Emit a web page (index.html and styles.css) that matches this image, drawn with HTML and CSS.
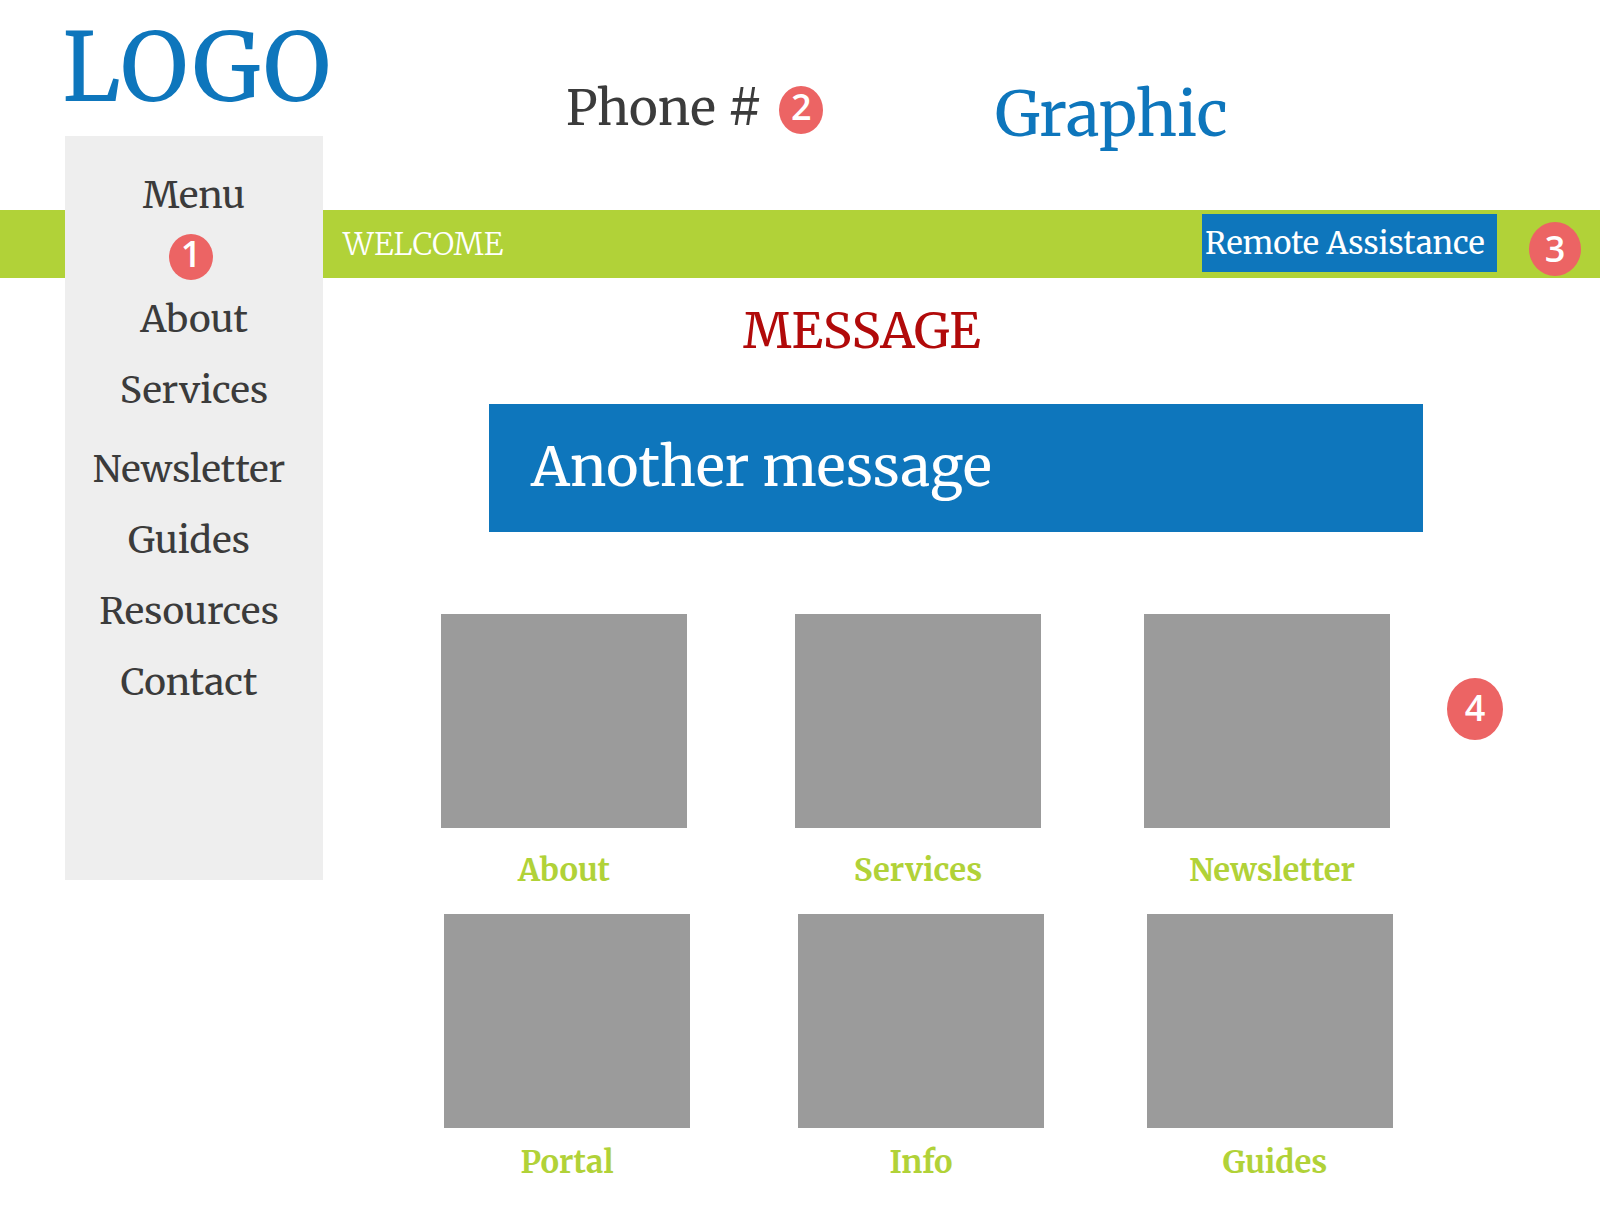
FILE: index.html
```
<!DOCTYPE html>
<html lang="en">
<head>
    <meta charset="UTF-8">
    <meta name="viewport" content="width=device-width, initial-scale=1.0">
    <title>Home</title>
    <link rel="stylesheet" href="styles.css">
</head>
<body>
    <div class="page">
        <a class="logo" href="#">LOGO</a>

        <header class="header">
            <div class="phone">Phone # <span class="badge tall">2</span></div>
            <div class="graphic">Graphic</div>
        </header>

        <div class="band">
            <span class="welcome">WELCOME</span>
            <a class="remote" href="#">Remote Assistance</a>
            <span class="badge medium">3</span>
        </div>

        <nav class="sidebar">
            <div class="menu-title">Menu</div>
            <span class="badge">1</span>
            <ul class="menu">
                <li><a href="#">About</a></li>
                <li><a href="#">Services</a></li>
            </ul>
            <ul class="menu menu-more">
                <li><a href="#">Newsletter</a></li>
                <li><a href="#">Guides</a></li>
                <li><a href="#">Resources</a></li>
                <li><a href="#">Contact</a></li>
            </ul>
        </nav>

        <main class="main">
            <h1 class="message">MESSAGE</h1>
            <div class="banner">Another message</div>
            <div class="tiles">
                <div class="tile-rows">
                    <div class="row">
                        <a class="tile" href="#"><span class="box"></span><span class="label">About</span></a>
                        <a class="tile" href="#"><span class="box"></span><span class="label">Services</span></a>
                        <a class="tile" href="#"><span class="box"></span><span class="label">Newsletter</span></a>
                    </div>
                    <div class="row row-second">
                        <a class="tile" href="#"><span class="box"></span><span class="label">Portal</span></a>
                        <a class="tile" href="#"><span class="box"></span><span class="label">Info</span></a>
                        <a class="tile" href="#"><span class="box"></span><span class="label">Guides</span></a>
                    </div>
                </div>
                <span class="badge large">4</span>
            </div>
        </main>
    </div>
</body>
</html>
```
FILE: styles.css
```
* {
    box-sizing: border-box;
}
body {
    margin: 0;
    background: #fff;
    color: #3b3b3b;
    font-family: "Merriweather", "DejaVu Serif Condensed", "DejaVu Serif", serif;
}
a {
    color: inherit;
    text-decoration: none;
}
.page {
    display: grid;
    grid-template-columns: 65px 258px 1fr;
    grid-template-rows: 136px 74px 68px auto;
}
.logo {
    grid-column: 2;
    grid-row: 1;
    margin-left: -3px;
    color: #0e76bc;
    font-size: 94px;
    line-height: 136px;
    white-space: nowrap;
}
.header {
    grid-column: 3;
    grid-row: 1 / 3;
    display: grid;
    grid-template-columns: 429px 1fr;
    padding-left: 243px;
}
.phone {
    display: flex;
    align-items: center;
    gap: 17px;
    height: 214px;
    font-size: 49px;
}
.phone .badge {
    margin-top: 6px;
}
.graphic {
    color: #0e76bc;
    font-size: 62px;
    line-height: 228px;
}

/* green bar, runs behind the sidebar */
.band {
    grid-column: 1 / -1;
    grid-row: 3;
    display: flex;
    align-items: center;
    padding: 0 19px 0 343px;
    background: #b1d238;
    color: #fff;
    font-size: 31px;
}
.welcome {
    flex: 1;
    margin-bottom: 2px;
    font-weight: 300;
}
.remote {
    width: 295px;
    height: 58px;
    margin: 0 32px 2px 0;
    padding-left: 3px;
    background: #0e76bc;
    line-height: 58px;
    white-space: nowrap;
}
.band .badge {
    margin-top: 10px;
}

.sidebar {
    grid-column: 2;
    grid-row: 2 / -1;
    align-self: start;
    z-index: 1;
    display: flex;
    flex-direction: column;
    align-items: center;
    height: 744px;
    padding-top: 24px;
    background: #eee;
    font-size: 37px;
    line-height: 71px;
}
.sidebar .badge {
    margin: 3px 6px 4px 0;
}
.menu {
    margin: 0;
    padding: 0;
    list-style: none;
    text-align: center;
}
.menu-more {
    margin: 8px 10px 0 0;
}

/* numbered callouts */
.badge {
    display: flex;
    align-items: center;
    justify-content: center;
    flex: none;
    width: 44px;
    height: 46px;
    padding-bottom: 6px;
    border-radius: 50%;
    background: #ec6464;
    color: #fff;
    font-family: "Open Sans", "Noto Sans", sans-serif;
    font-size: 36px;
    font-weight: 600;
    line-height: 36px;
}
.tall {
    height: 48px;
}
.medium {
    width: 52px;
    height: 54px;
    padding-bottom: 0;
}
.large {
    width: 56px;
    height: 62px;
    padding-bottom: 2px;
}

.main {
    grid-column: 3;
    grid-row: 4;
}
.message {
    margin: 0;
    padding: 19px 0 0 420px;
    color: #b10a0a;
    font-size: 49px;
    font-weight: normal;
    line-height: 68px;
}
.banner {
    height: 128px;
    margin: 39px 177px 0 166px;
    padding-left: 42px;
    background: #0e76bc;
    color: #fff;
    font-size: 55px;
    line-height: 126px;
}
.tiles {
    display: flex;
    padding: 82px 97px 0 118px;
}
.tile-rows {
    flex: 1;
}
.row {
    display: grid;
    grid-template-columns: 354fr 349fr 246fr;
    height: 300px;
    margin-right: 57px;
}
.row-second {
    margin-right: 54px;
    margin-left: 3px;
}
.tile {
    width: 246px;
    color: #b1d238;
    font-size: 31px;
    font-weight: bold;
    line-height: 84px;
    text-align: center;
}
.box {
    display: block;
    height: 214px;
    background: #9b9b9b;
}
.label {
    display: block;
}
.tile:last-child .label {
    padding-left: 10px;
}
.row-second .tile {
    line-height: 67px;
}
.tiles .badge {
    margin-top: 64px;
}
```
